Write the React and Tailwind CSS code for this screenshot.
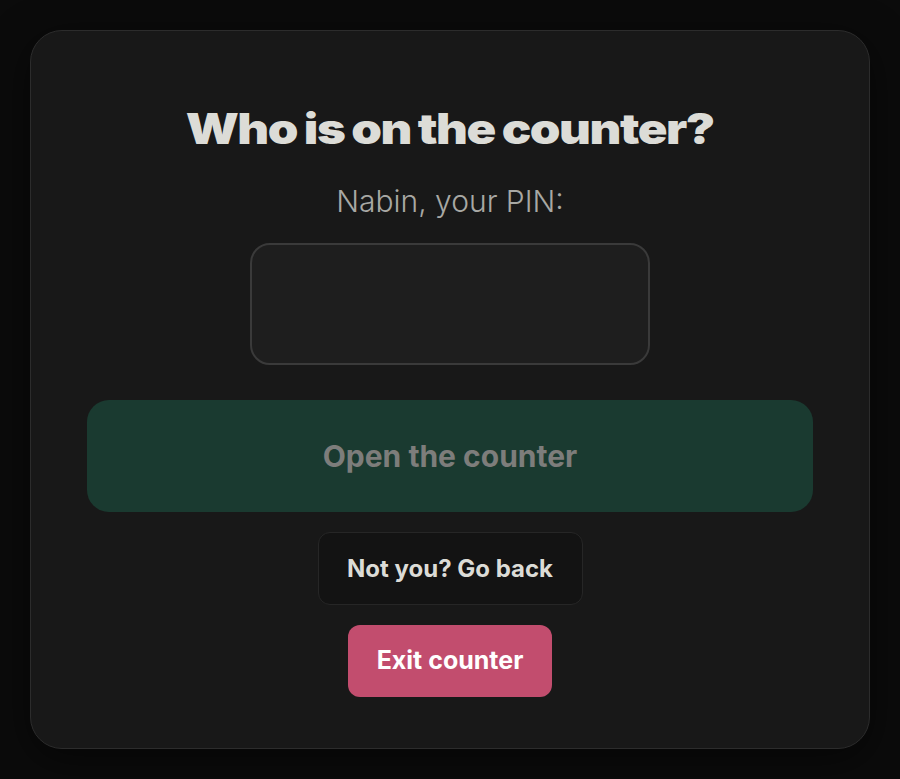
export default function App() {
  return (
    <div className="min-h-screen bg-[#0b0b0b] p-[30px]" style={{ fontFamily: 'Inter, "Noto Sans", sans-serif' }}>
      <div className="flex h-[719px] flex-col items-center rounded-[32px] border border-[#2c2c2c] bg-[#181818] px-[56px] pt-[74px] shadow-[0_10px_40px_rgba(0,0,0,0.5)]">
        {/* display face is extended; stretch Inter Black to match */}
        <h1 className="scale-x-[1.17] text-[42px] font-black leading-[48px] tracking-[-0.03em] [word-spacing:-0.03em] text-[#dcdcd7]">
          Who is on the counter?
        </h1>

        <p className="mt-[32px] text-[30px] font-light leading-[32px] text-[#a8a8a4]">
          Nabin, your PIN:
        </p>

        <input
          type="password"
          className="mt-[26px] h-[122px] w-[400px] rounded-[20px] border-2 border-[#3a3a3a] bg-[#1e1e1e] text-center text-3xl text-white outline-none"
        />

        <button className="mt-[35px] flex h-[112px] w-full items-center justify-center rounded-[22px] bg-[#1a3a30] text-[30px] font-bold text-[#7d7d7b]">
          Open the counter
        </button>

        <button className="mt-[20px] flex h-[73px] w-[265px] items-center justify-center rounded-[12px] border border-[#262626] bg-[#131313] text-[24px] font-bold text-[#dcdcd7]">
          Not you? Go back
        </button>

        <button className="mt-[20px] flex h-[72px] w-[204px] items-center justify-center rounded-[12px] bg-[#c24d6e] text-[25px] font-bold text-white">
          Exit counter
        </button>
      </div>
    </div>
  )
}
